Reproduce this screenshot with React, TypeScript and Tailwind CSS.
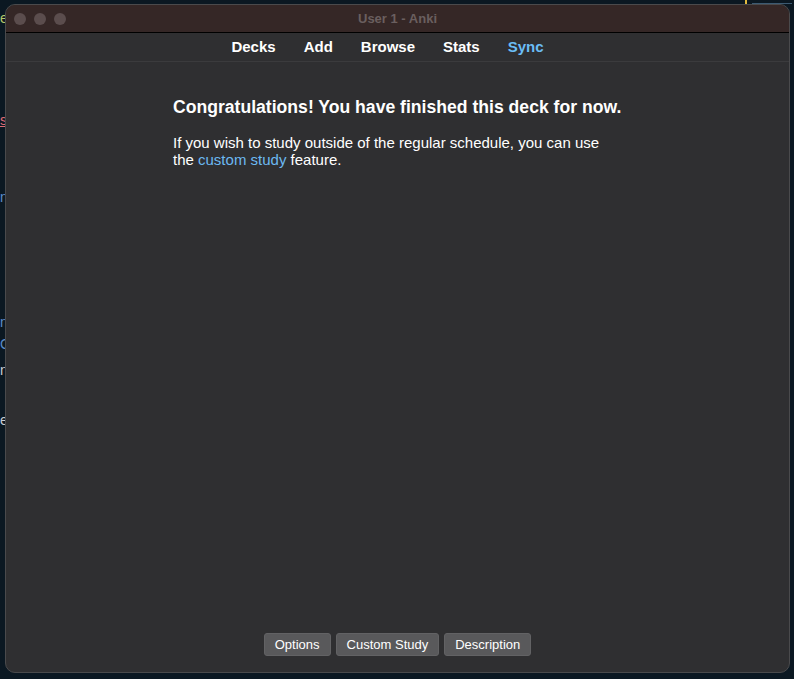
import React from 'react';

const font = { fontFamily: '"Liberation Sans", Arial, sans-serif' };

const navItems = ['Decks', 'Add', 'Browse', 'Stats', 'Sync'];

const App: React.FC = () => {
  return (
    <div className="relative w-[794px] h-[679px] overflow-hidden bg-[#0b1822]" style={font}>
      {/* desktop editor fragments peeking behind the window */}
      <span className="absolute left-0 top-[8px] text-[14px] text-[#b5c96a]">e</span>
      <span className="absolute left-0 top-[110px] text-[14px] text-[#e06c75] underline">s</span>
      <span className="absolute left-0 top-[187px] text-[14px] text-[#5a8bc9]">n</span>
      <span className="absolute left-0 top-[312px] text-[14px] text-[#5a8bc9]">n</span>
      <span className="absolute left-0 top-[334px] text-[14px] text-[#5a8bc9]">G</span>
      <span className="absolute left-0 top-[360px] text-[14px] text-[#c8ccd2]">n</span>
      <span className="absolute left-0 top-[410px] text-[14px] text-[#c8ccd2]">e</span>
      <span className="absolute left-[745px] top-0 w-[2px] h-[5px] bg-[#e2b93d]" />
      <span className="absolute left-[752px] top-[3px] w-[40px] h-[1px] bg-[#3c5a72]" />

      {/* window */}
      <div className="absolute left-[5px] top-[4px] w-[785px] h-[669px] rounded-[10px] overflow-hidden border border-[#4a4a4c] bg-[#2f2f31] flex flex-col">
        <div className="h-[28px] shrink-0 bg-[#352726] border-b border-black relative flex items-center justify-center">
          <div className="absolute left-[8px] top-[8px] flex gap-[8px]">
            <span className="w-[12px] h-[12px] rounded-full bg-[#5b4d4d]" />
            <span className="w-[12px] h-[12px] rounded-full bg-[#5b4d4d]" />
            <span className="w-[12px] h-[12px] rounded-full bg-[#5b4d4d]" />
          </div>
          <span className="text-[13px] font-bold text-[#6a5f5f]">User 1 - Anki</span>
        </div>

        <div className="h-[29px] shrink-0 border-b border-[#3b3b3d] flex items-center justify-center gap-[28px] pt-[1px] pr-[20px]">
          {navItems.map((item) => (
            <span
              key={item}
              className={`text-[15px] font-bold ${item === 'Sync' ? 'text-[#6bbdf6]' : 'text-white'}`}
            >
              {item}
            </span>
          ))}
        </div>

        <div className="flex-1 flex flex-col">
          <div className="w-[449px] mx-auto pt-[35px]">
            <h1 className="text-[17.6px] leading-[20px] font-bold text-white whitespace-nowrap">
              Congratulations! You have finished this deck for now.
            </h1>
            <p className="mt-[17px] text-[15px] leading-[17px] text-white">
              If you wish to study outside of the regular schedule, you can use the{' '}
              <span className="text-[#6cb9f2]">custom study</span> feature.
            </p>
          </div>

          <div className="mt-auto mb-[16px] flex justify-center gap-[5px]">
            {['Options', 'Custom Study', 'Description'].map((label) => (
              <button
                key={label}
                className="h-[23px] px-[10px] rounded-[3px] bg-[#59595b] border border-[#626264] text-[13px] text-white leading-none"
              >
                {label}
              </button>
            ))}
          </div>
        </div>
      </div>
    </div>
  );
};

export default App;
